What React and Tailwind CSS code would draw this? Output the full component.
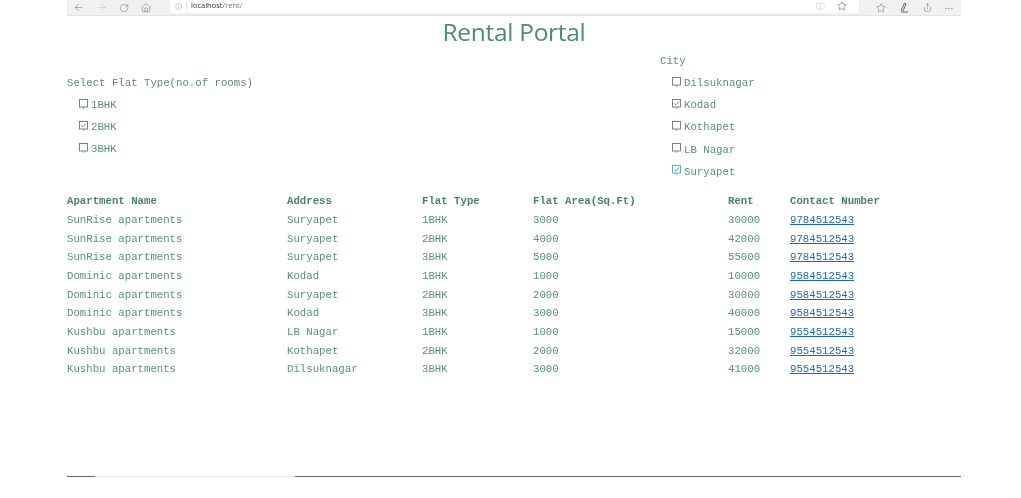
import React from "react";
import { ArrowLeft, ArrowRight, RotateCw, Home, Info, BookOpen, Star, Share } from "lucide-react";

const rows = [
  ["SunRise apartments", "Suryapet", "1BHK", "3000", "30000", "9784512543"],
  ["SunRise apartments", "Suryapet", "2BHK", "4000", "42000", "9784512543"],
  ["SunRise apartments", "Suryapet", "3BHK", "5000", "55000", "9784512543"],
  ["Dominic apartments", "Kodad", "1BHK", "1000", "10000", "9584512543"],
  ["Dominic apartments", "Suryapet", "2BHK", "2000", "30000", "9584512543"],
  ["Dominic apartments", "Kodad", "3BHK", "3000", "40000", "9584512543"],
  ["Kushbu apartments", "LB Nagar", "1BHK", "1000", "15000", "9554512543"],
  ["Kushbu apartments", "Kothapet", "2BHK", "2000", "32000", "9554512543"],
  ["Kushbu apartments", "Dilsuknagar", "3BHK", "3000", "41000", "9554512543"],
];

const cols = "grid grid-cols-[220px_135px_111px_195px_62px_1fr] items-center h-[18.67px]";

function Check({ label, checked, blue }) {
  return (
    <div className="flex items-center h-[22.2px]">
      <svg width="9" height="10" viewBox="0 0 9 10" className="mr-[3px] -mt-[3px]" fill="none">
        <rect x="0.5" y="0.5" width="8" height="7.5" stroke={blue ? "#4a9fd0" : "#6f7774"} strokeWidth="0.9" />
        <path d="M3.5 8.4 L4.5 9.6 L5.5 8.4" stroke={blue ? "#4a9fd0" : "#6f7774"} strokeWidth="0.8" />
        {checked && <path d="M2 4.3 L3.7 6 L7 2.4" stroke={blue ? "#3f7f9f" : "#6f7774"} strokeWidth="0.9" />}
      </svg>
      <span>{label}</span>
    </div>
  );
}

function Tool({ children, className }) {
  return <span className={"flex items-center justify-center text-[#6b6b6b] " + (className || "")}>{children}</span>;
}

export default function App() {
  return (
    <div className="w-[1021px] h-[498px] bg-white overflow-hidden pl-[67px] pr-[60px] flex flex-col blur-[0.3px] text-[#5a8f80] text-[10.7px] font-['Liberation_Mono',monospace]">
      <div className="h-[16px] shrink-0 bg-[#f1f1f1] border-b border-[#e2e2e2] flex items-center font-['Open_Sans',sans-serif]">
        <div className="flex items-center pl-[6px] w-[103px] gap-[12px]">
          <Tool><ArrowLeft size={11} strokeWidth={1.2} /></Tool>
          <Tool className="text-[#bdbdbd]"><ArrowRight size={11} strokeWidth={1.2} /></Tool>
          <Tool><RotateCw size={10} strokeWidth={1.2} /></Tool>
          <Tool><Home size={10} strokeWidth={1.2} /></Tool>
        </div>
        <div className="flex items-center bg-white h-[13px] w-[689px] -mt-[3px] pl-[5px] pr-[12px]">
          <Info size={7} strokeWidth={1.2} className="text-[#777777]" />
          <span className="ml-[4px] pl-[4px] border-l border-[#dddddd] text-[7.5px] text-[#333333] leading-none">
            localhost<span className="text-[#777777]">/rent/</span>
          </span>
          <div className="ml-auto flex items-center gap-[12px]">
            <Tool className="text-[#c4c4c4]"><BookOpen size={9} strokeWidth={1.2} /></Tool>
            <Tool className="text-[#444444]"><Star size={10} strokeWidth={1.2} /></Tool>
          </div>
        </div>
        <div className="flex items-center pl-[17px] gap-[13px] text-[#555555]">
          <Tool><Star size={10} strokeWidth={1.2} /></Tool>
          <svg width="11" height="11" viewBox="0 0 11 11" fill="none" stroke="#555555" strokeWidth="0.9"><path d="M2 9 L5.5 1 L7 2 L4 9 M2 10 H9" /></svg>
          <Tool><Share size={9} strokeWidth={1.2} /></Tool>
          <span className="text-[9px] leading-none -mt-[4px] tracking-[0.5px]">...</span>
        </div>
      </div>

      <h1 className="text-center text-[24.5px] leading-[32px] font-normal text-[#4f8a7a] font-['Open_Sans',sans-serif] h-[32px] -tracking-[0.3px]">
        Rental Portal
      </h1>

      <div className="flex h-[129px] shrink-0">
        <div className="w-[593px] pt-[25px]">
          <div className="h-[21px] flex items-center text-[#63877d]">Select Flat Type(no.of rooms)</div>
          <div className="pl-[12px]">
            <Check label="1BHK" />
            <Check label="2BHK" checked />
            <Check label="3BHK" />
          </div>
        </div>
        <div className="pt-[3px]">
          <div className="h-[21px] flex items-center text-[#63877d]">City</div>
          <div className="pl-[12px]">
            <Check label="Dilsuknagar" />
            <Check label="Kodad" checked />
            <Check label="Kothapet" />
            <Check label="LB Nagar" />
            <Check label="Suryapet" checked blue />
          </div>
        </div>
      </div>

      <div className="mt-[15px]">
        <div className={cols + " font-bold text-[#4d7f70]"}>
          <span>Apartment Name</span><span>Address</span><span>Flat Type</span><span>Flat Area(Sq.Ft)</span><span>Rent</span><span>Contact Number</span>
        </div>
        {rows.map((r, i) => (
          <div key={i} className={cols}>
            <span>{r[0]}</span><span>{r[1]}</span><span>{r[2]}</span><span>{r[3]}</span><span>{r[4]}</span>
            <a href="#" className="text-[#1f68b8] underline">{r[5]}</a>
          </div>
        ))}
      </div>

      <div className="mt-auto mb-[21px] h-[1.5px] bg-[#666666] flex">
        <div className="ml-[28px] w-[200px] bg-[#e6e6e6]" />
      </div>
    </div>
  );
}
